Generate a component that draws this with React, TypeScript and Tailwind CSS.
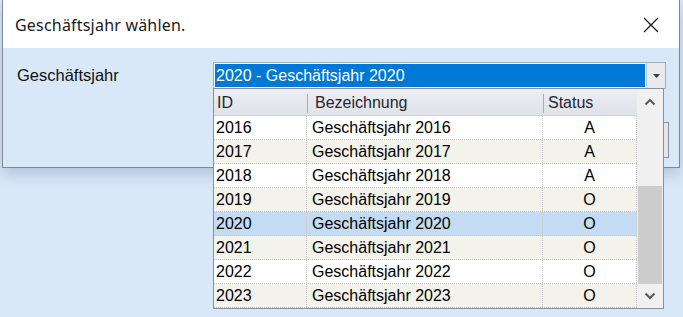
import React from "react";

interface Jahr {
  id: string;
  name: string;
  status: string;
}

const jahre: Jahr[] = [
  { id: "2016", name: "Geschäftsjahr 2016", status: "A" },
  { id: "2017", name: "Geschäftsjahr 2017", status: "A" },
  { id: "2018", name: "Geschäftsjahr 2018", status: "A" },
  { id: "2019", name: "Geschäftsjahr 2019", status: "O" },
  { id: "2020", name: "Geschäftsjahr 2020", status: "O" },
  { id: "2021", name: "Geschäftsjahr 2021", status: "O" },
  { id: "2022", name: "Geschäftsjahr 2022", status: "O" },
  { id: "2023", name: "Geschäftsjahr 2023", status: "O" },
];

const ausgewaehlt = "2020";

function Chevron({ down }: { down?: boolean }) {
  return (
    <svg width="12" height="8" viewBox="0 0 12 8">
      <path
        d={down ? "M1.5 1.5 L6 6 L10.5 1.5" : "M1.5 6.5 L6 2 L10.5 6.5"}
        fill="none"
        stroke="#5a5a5a"
        strokeWidth="2"
      />
    </svg>
  );
}

export default function App() {
  return (
    <div
      className="relative w-[683px] h-[317px] overflow-hidden bg-[#d9e8f9] text-black"
      style={{ fontFamily: '"Liberation Sans", Arial, sans-serif' }}
    >
      {/* Dialog */}
      <div className="ml-[2px] w-[678px] flex flex-col border-x border-b border-[#7f8995] bg-[#d8e8f9] shadow-[0_6px_14px_rgba(60,80,110,0.25)]">
        <div className="h-[48px] bg-white flex items-center justify-between pl-[12px] pr-[20px] pt-[2px]">
          <span
            className="text-[16px] text-[#1a1a1a] tracking-[0.2px]"
            style={{ fontFamily: '"Noto Sans", "Open Sans", sans-serif' }}
          >
            Geschäftsjahr wählen.
          </span>
          <svg width="16" height="16" viewBox="0 0 16 16">
            <path d="M1 1 L15 15 M15 1 L1 15" stroke="#1a1a1a" strokeWidth="1.3" />
          </svg>
        </div>
        <div className="flex flex-col pt-[14px] pb-[9px]">
          <div className="flex items-center">
            <div className="w-[210px] pl-[14px] text-[16.5px] text-[#111]">Geschäftsjahr</div>
            <div className="w-[453px] h-[27px] flex border border-[#a8acb3] bg-white">
              <div className="flex-1 m-[1px] bg-[#0078d7] text-white text-[16px] leading-[23px] pl-[1px]">
                2020 - Geschäftsjahr 2020
              </div>
              <div className="w-[19px] flex items-center justify-center bg-[#e8eaee] border-l border-[#c5c9cf]">
                <svg width="7" height="4" viewBox="0 0 7 4">
                  <path d="M0 0 L7 0 L3.5 4 Z" fill="#3c3c3c" />
                </svg>
              </div>
            </div>
          </div>
          <div className="flex justify-end mt-[33px] mr-[10px]">
            <div className="w-[80px] h-[36px] border border-[#8c9096] bg-[#e4e6ea]" />
          </div>
        </div>
      </div>

      {/* Dropdown list */}
      <div className="absolute left-[213px] top-[88px] w-[451px] flex border border-[#8a9099] bg-white text-[16px]">
        <div className="flex-1 flex flex-col">
          <div className="h-[27px] flex items-center pt-[2px] bg-gradient-to-b from-[#eceef2] to-[#dfe2e8] text-[#1e2633] border-b border-[#cfd3da]">
            <div className="w-[93px] pl-[3px]">ID</div>
            <div className="w-[1px] h-[19px] bg-[#a7acb4]" />
            <div className="w-[235px] pl-[7px]">Bezeichnung</div>
            <div className="w-[1px] h-[19px] bg-[#a7acb4]" />
            <div className="flex-1 pl-[4px]">Status</div>
          </div>
          {jahre.map((j, i) => {
            const sel = j.id === ausgewaehlt;
            const bg = sel ? "bg-[#c3dcf3]" : i % 2 === 1 ? "bg-[#f3f3eb]" : "bg-white";
            return (
              <div
                key={j.id}
                className={`h-[24px] flex items-center border-b border-dotted border-[#c6c6c6] ${bg}`}
              >
                <div className="w-[93px] h-full pl-[2px] pt-[1px] flex items-center border-r border-dotted border-[#c6c6c6]">
                  {j.id}
                </div>
                <div className="w-[236px] h-full pl-[5px] pt-[1px] flex items-center border-r border-dotted border-[#c6c6c6]">
                  {j.name}
                </div>
                <div className="flex-1 h-full pt-[1px] flex items-center justify-center border-r border-dotted border-[#c6c6c6]">
                  {j.status}
                </div>
              </div>
            );
          })}
        </div>
        <div className="w-[26px] flex flex-col bg-[#f0f0f0]">
          <div className="h-[26px] flex items-center justify-center">
            <Chevron />
          </div>
          <div className="flex-1 flex flex-col justify-end px-[1px]">
            <div className="h-[98px] bg-[#cdcdcd]" />
          </div>
          <div className="h-[24px] flex items-center justify-center">
            <Chevron down />
          </div>
        </div>
      </div>
    </div>
  );
}
